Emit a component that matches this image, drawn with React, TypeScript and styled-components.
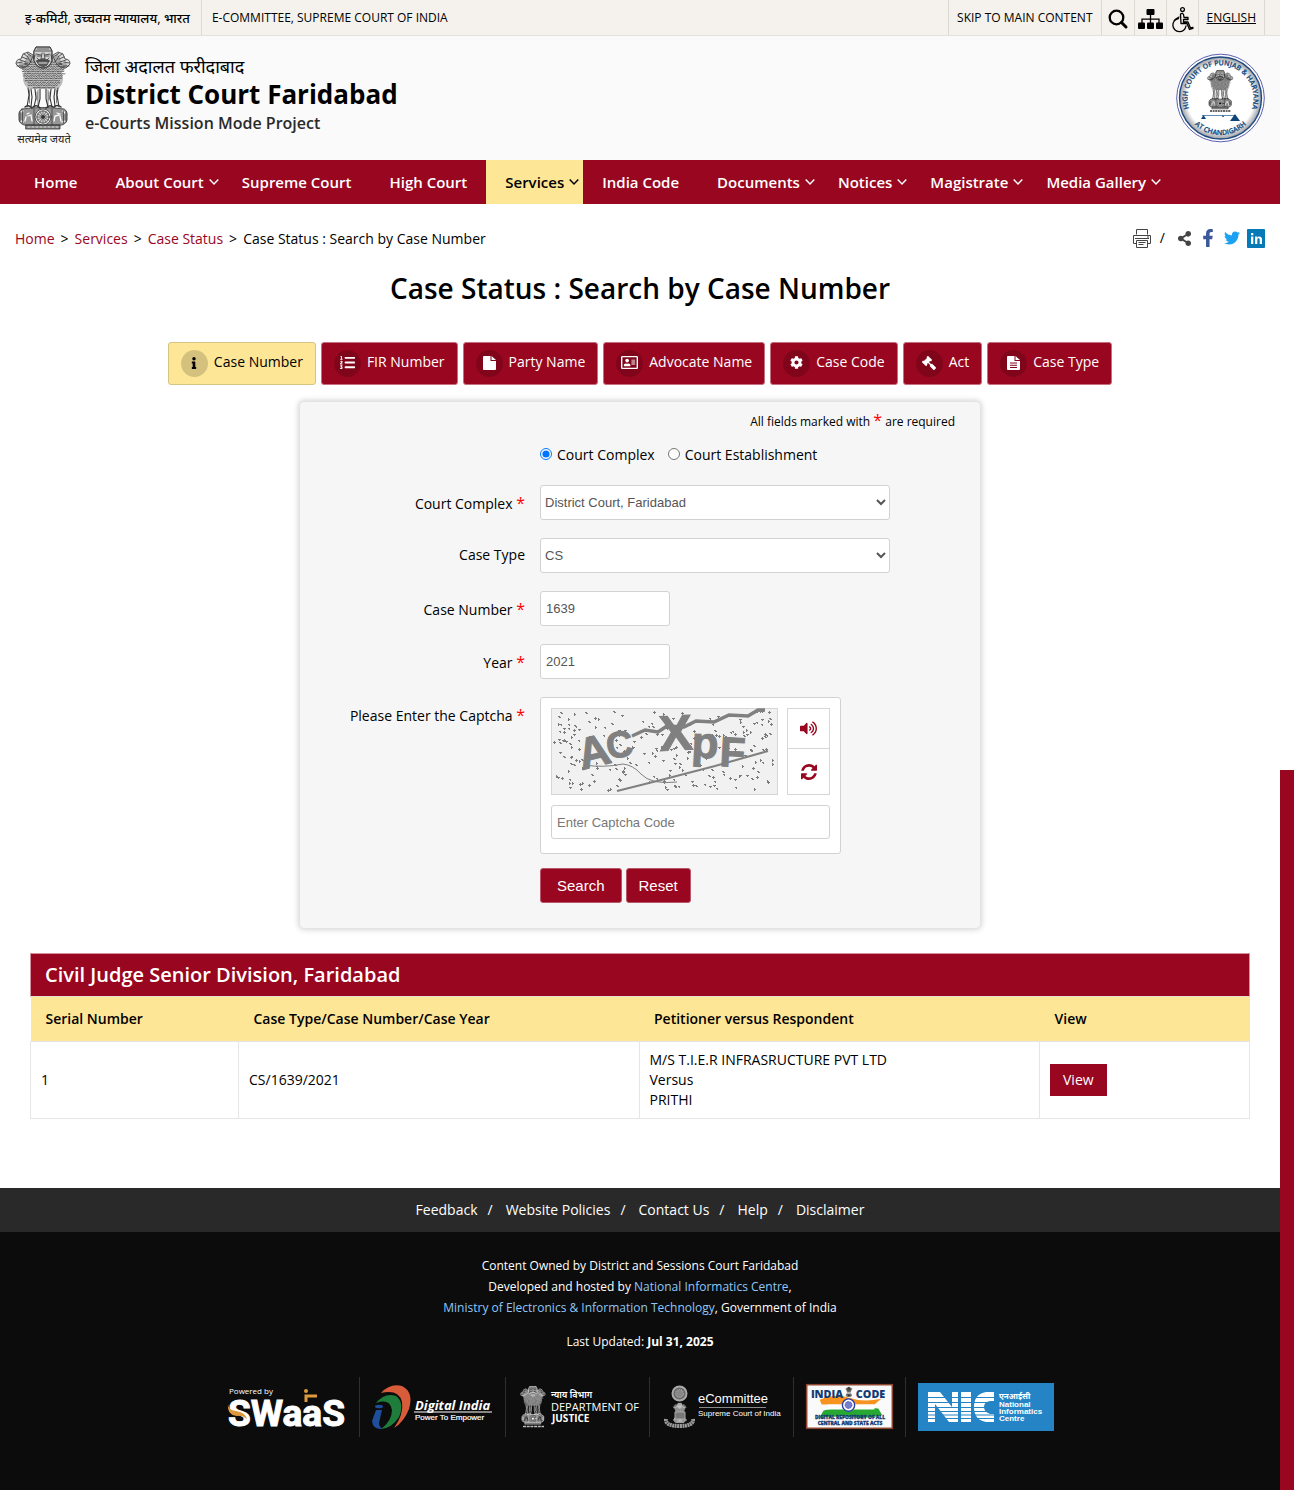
import React from "react";
import styled, { createGlobalStyle, css } from "styled-components";
import {
  FaInfo,
  FaListOl,
  FaRegAddressCard,
  FaCog,
  FaGavel,
  FaVolumeUp,
  FaShareAlt,
  FaFacebookF,
  FaTwitter,
} from "react-icons/fa";

const maroon = "#99061f";
const cream = "#fee697";
const sans = `"Open Sans", "Noto Sans", "Noto Sans Devanagari", sans-serif`;
const arial = `"Liberation Sans", Arial, sans-serif`;

const GlobalStyle = createGlobalStyle`
  *, *::before, *::after { box-sizing: border-box; }
  body { margin: 0; background: #fff; color: #000; font-family: ${sans}; font-size: 14px; line-height: 20px; }
  a { color: inherit; text-decoration: none; }
  h1, h2, p, ul, ol { margin: 0; padding: 0; }
  ul, ol { list-style: none; }
  svg { display: block; overflow: visible; }
`;

const Shell = styled.div`
  display: grid;
  grid-template-columns: minmax(0, 1fr) 14px;
  min-height: 100vh;
`;
const Page = styled.div`
  display: flex;
  flex-direction: column;
`;
const Rail = styled.div`
  display: flex;
  padding-top: 770px;
`;
const RailFill = styled.div`
  flex: 1;
  background: ${maroon};
`;

/* Top bar */
const TopBar = styled.div`
  display: flex;
  justify-content: space-between;
  height: 36px;
  padding: 0 15px;
  background: #f5f2ed;
  border-bottom: 1px solid #e3e1dd;
  font-size: 12px;
  font-weight: 500;
`;
const TopList = styled.ul`
  display: flex;
`;
const TopItem = styled.li<{ $pad?: number; $closed?: boolean }>`
  display: flex;
  align-items: center;
  padding: 0 ${(p) => p.$pad ?? 10}px;
  border-left: 1px solid #dcd9d5;
  ${(p) => (p.$closed ? css`border-right: 1px solid #dcd9d5;` : "")}
`;
const TopHindi = styled.li`
  display: flex;
  align-items: center;
  padding: 0 11px 0 10px;
  font-size: 13px;
`;
const IconButton = styled.button`
  padding: 0;
  border: 0;
  background: none;
  color: #000;
  display: flex;
  cursor: pointer;
`;
const LangLink = styled.a`
  text-decoration: underline;
`;

/* Brand header */
const Header = styled.header`
  display: flex;
  justify-content: space-between;
  align-items: flex-start;
  height: 124px;
  padding: 10px 15px;
  background: #fafafa;
`;
const Brand = styled.a`
  display: flex;
  gap: 13px;
`;
const BrandText = styled.span`
  display: flex;
  flex-direction: column;
  padding-top: 7px;
`;
const BrandHindi = styled.span`
  font-size: 18px;
  line-height: 26px;
`;
const BrandName = styled.strong`
  font-size: 26px;
  font-weight: 700;
  line-height: 30px;
`;
const BrandSub = styled.span`
  font-size: 16px;
  font-weight: 600;
  line-height: 28px;
  color: #2a2a2a;
`;
const SealLink = styled.a`
  padding-top: 7px;
`;

/* Navigation */
const Nav = styled.nav`
  background: ${maroon};
  padding: 0 15px;
`;
const NavList = styled.ul`
  display: flex;
  height: 44px;
`;
const NavLink = styled.a<{ $active?: boolean; $menu?: boolean }>`
  display: flex;
  align-items: center;
  gap: 5px;
  height: 100%;
  padding: 0 ${(p) => (p.$menu ? 4 : 19)}px 0 19px;
  font-size: 15px;
  font-weight: 600;
  white-space: nowrap;
  color: ${(p) => (p.$active ? "#000" : "#fff")};
  background: ${(p) => (p.$active ? cream : "transparent")};
`;

/* Main area */
const Main = styled.main`
  padding: 24px 15px 69px;
`;
const CrumbRow = styled.div`
  display: flex;
  justify-content: space-between;
  align-items: center;
  height: 22px;
`;
const Crumbs = styled.ol`
  display: flex;
  gap: 6px;
`;
const CrumbLink = styled.a`
  color: ${maroon};
`;
const Share = styled.div`
  display: flex;
  align-items: center;
  align-self: flex-start;
  gap: 7px;
`;
const Slash = styled.span`
  padding: 0 5px 0 2px;
`;
const Title = styled.h1`
  margin-top: 18px;
  text-align: center;
  font-size: 28px;
  font-weight: 600;
  line-height: 40px;
`;
const Tabs = styled.ul`
  display: flex;
  flex-wrap: wrap;
  justify-content: center;
  gap: 5px;
  margin-top: 34px;
`;
const TabLink = styled.a<{ $active?: boolean }>`
  display: flex;
  align-items: flex-start;
  gap: 6px;
  height: 43px;
  padding: 7px 12px;
  border: 1px solid ${(p) => (p.$active ? "#d6c484" : "#c66f7e")};
  border-radius: 3px;
  background: ${(p) => (p.$active ? cream : maroon)};
  color: ${(p) => (p.$active ? "#000" : "#fff")};
  line-height: 24px;
`;
const TabIcon = styled.span<{ $flip?: boolean }>`
  display: flex;
  align-items: center;
  justify-content: center;
  width: 27px;
  height: 27px;
  padding-bottom: 2px;
  border-radius: 50%;
  background: rgba(0, 0, 0, 0.16);
  ${(p) => (p.$flip ? css`svg { transform: scaleX(-1); }` : "")}
`;

/* Form */
const Panel = styled.form`
  width: 100%;
  max-width: 682px;
  margin: 16px auto 0;
  padding: 7px 25px 25px;
  border: 1px solid #e4e4e4;
  border-radius: 5px;
  background: #f6f6f6;
  box-shadow: 0 0 6px rgba(0, 0, 0, 0.22);
`;
const Note = styled.p`
  height: 23px;
  text-align: right;
  font-size: 12px;
`;
const Star = styled.span`
  color: #f00;
  font-size: 16px;
  line-height: 22px;
`;
const Fields = styled.div`
  display: grid;
  grid-template-columns: 200px minmax(0, 1fr);
  column-gap: 15px;
  row-gap: 18px;
  margin-top: 12px;
`;
const Radios = styled.div`
  grid-column: 2;
  display: flex;
  gap: 13px;
  height: 22px;
  margin-bottom: 1px;
`;
const RadioLabel = styled.label`
  display: flex;
  align-items: center;
  gap: 5px;
`;
const Radio = styled.input`
  width: 12px;
  height: 12px;
  margin: 0 0 2px;
`;
const FieldLabel = styled.label`
  text-align: right;
  padding-top: 7px;
`;
const control = css`
  border: 1px solid #d2d2d2;
  border-radius: 3px;
  background: #fff;
  color: #555;
  font-family: ${arial};
  font-size: 13px;
`;
const Select = styled.select`
  ${control}
  width: 100%;
  height: 35px;
  max-width: 350px;
`;
const Input = styled.input<{ $wide?: boolean }>`
  ${control}
  width: ${(p) => (p.$wide ? "100%" : "130px")};
  height: ${(p) => (p.$wide ? 34 : 35)}px;
  padding: 0 5px;
  &::placeholder {
    color: #777;
  }
`;
const CaptchaBox = styled.div`
  width: 301px;
  padding: 10px 10px 14px;
  border: 1px solid #d2d2d2;
  border-radius: 3px;
  background: #fff;
`;
const CaptchaTop = styled.div`
  display: flex;
  justify-content: space-between;
  margin-bottom: 10px;
`;
const CaptchaTools = styled.div`
  display: grid;
  grid-template-rows: 39px 1fr;
  width: 43px;
  height: 87px;
  border: 1px solid #d6d6d6;
`;
const ToolButton = styled.button`
  display: flex;
  align-items: center;
  justify-content: center;
  padding: 0;
  border: 0;
  background: #fff;
  color: ${maroon};
  cursor: pointer;
  & + & {
    border-top: 1px solid #d6d6d6;
  }
`;
const Actions = styled.div`
  grid-column: 2;
  display: flex;
  gap: 4px;
  margin-top: -4px;
`;
const ActionButton = styled.button<{ $pad: number }>`
  height: 35px;
  padding: 0 ${(p) => p.$pad}px;
  border: 1px solid #b9576a;
  border-radius: 3px;
  background: ${maroon};
  color: #fff;
  font-family: ${arial};
  font-size: 15px;
  cursor: pointer;
`;

/* Results */
const Results = styled.section`
  margin: 24px 15px 0;
`;
const Table = styled.table`
  width: 100%;
  table-layout: fixed;
  border-collapse: collapse;
`;
const SerialCol = styled.col`
  width: 208px;
`;
const ViewCol = styled.col`
  width: 210px;
`;
const Caption = styled.caption`
  height: 44px;
  padding: 0 14px;
  border: 1px solid #d6929d;
  border-bottom-color: #e6e0d0;
  background: ${maroon};
  color: #fff;
  text-align: left;
  font-size: 20px;
  font-weight: 600;
  line-height: 42px;
`;
const Th = styled.th`
  height: 44px;
  padding: 0 15px;
  background: ${cream};
  text-align: left;
  font-weight: 600;
`;
const Td = styled.td`
  height: 77px;
  padding: 8px 10px;
  border: 1px solid #e6e6e6;
`;
const ViewLink = styled.a`
  display: inline-block;
  padding: 6px 13px;
  background: ${maroon};
  color: #fff;
`;

/* Footer */
const Footer = styled.footer`
  flex: 1;
  background: #0c0c0c;
  color: #fff;
`;
const FooterLinks = styled.ul`
  display: flex;
  flex-wrap: wrap;
  justify-content: center;
  padding: 12px 0;
  background: #292929;
`;
const FooterItem = styled.li`
  & + &::before {
    content: "/";
    margin: 0 13px 0 10px;
  }
`;
const Credits = styled.div`
  padding-top: 23px;
  text-align: center;
  font-size: 12px;
  line-height: 21px;
`;
const CreditLink = styled.a`
  color: #8fc7f7;
`;
const Updated = styled.p`
  margin-top: 13px;
`;
const Logos = styled.ul`
  display: flex;
  flex-wrap: wrap;
  justify-content: center;
  margin-top: 25px;
`;
const LogoItem = styled.li`
  display: flex;
  align-items: center;
  height: 60px;
  padding: 0 12px;
  & + & {
    border-left: 1px solid #2f2f2f;
  }
`;

/* State emblem: lion capital on its abacus */
function EmblemArt({ ink, paper }: { ink: string; paper: string }) {
  const curls: [number, number][] = [];
  for (let r = 0; r < 12; r++) {
    const half = [12, 18, 20, 21, 20, 20, 19, 18, 17, 15, 14, 10][r];
    for (let x = -half; x <= half; x += 2.5) curls.push([28 + x + (r % 2), 16 + r * 2.3]);
  }
  return (
    <g fill="none" stroke={ink} strokeWidth="0.8" strokeLinecap="round">
      <path
        d="M9 17Q4 14 4 20L9 26L8 34Q10 42 15 43L42 43Q47 41 48 34L47 26L52 20Q52 14 47 17L43 8L36 10L20 10L13 8Z"
        fill={ink}
        fillOpacity="0.3"
        stroke="none"
      />
      {curls.map(([x, y], i) => (
        <path key={i} d={`M${x - 1} ${y}q1 ${i % 3 ? 2.2 : 1.2} 2 0`} strokeWidth="0.7" />
      ))}
      <path d="M19 5L21 1L35 1L37 5L37 15Q34 22 28 22Q22 22 19 15Z" fill={paper} />
      <path d="M19 5L21 1L35 1L37 5L37 15Q34 22 28 22Q22 22 19 15Z" fill={ink} fillOpacity="0.2" />
      <path d="M20 5h16M22 3h12M21 8l5 1M30 9l5-1M22 10h3.500M30.500 10H34M27 7l-1 6h4l-1-6M21 15q7-4 14 0M20 9l-1 4M36 9l1 4M22 12l2 2M34 12l-2 2" />
      <path d="M22 15Q28 13 34 15L32 19Q28 22 24 19Z" fill={ink} fillOpacity="0.75" />
      <path d="M24 17h8" stroke={paper} strokeDasharray="1.200 0.600" />
      <path
        d="M18 9L13 6L8 8L6 13Q1 13 1 18L5 22Q12 22 15 17ZM38 9L43 6L48 8L50 13Q55 13 55 18L51 22Q44 22 41 17Z"
        fill={ink}
        fillOpacity="0.15"
      />
      <path d="M9 8l4 3M7 11l5 2M5 14l6 2M2 17l5-1M2 20l6 0M12 7l4 3M13 12l3 4M9 18l4-1M47 8l-4 3M49 11l-5 2M51 14l-6 2M54 17l-5-1M54 20l-6 0M44 7l-4 3M43 12l-3 4M47 18l-4-1" />
      <path
        d="M13 42L14 49L12 61M16 43L17 51L16 61M20 43L21 52L19 61M25 43L25 53L23 61M31 43L31 53L33 61M36 43L35 52L37 61M40 43L39 51L40 61M43 42L42 49L44 61"
        strokeWidth="1.100"
      />
      <path d="M23 44v15M33 44v15M14.500 44v13M41.500 44v13M22 46v8M34 46v8" strokeWidth="0.600" />
      <path d="M18 61q4-3 7 1M31 62q4-4 7-1M10 61q3-3 7 1M39 61q3-3 7 0" strokeWidth="1.500" />
      <path
        d="M7 63Q28 60 49 63Q53 65 52 71Q53 77 47 79L9 79Q3 77 4 71Q3 65 7 63Z"
        fill={ink}
        fillOpacity="0.5"
      />
      <circle cx="28" cy="71" r="8" fill={paper} />
      <circle cx="28" cy="71" r="6.200" fill={ink} fillOpacity="0.2" />
      {Array.from({ length: 12 }, (_, i) => {
        const a = (i * Math.PI) / 6;
        return <path key={i} strokeWidth="0.600" d={`M28 71L${28 + 6 * Math.cos(a)} ${71 + 6 * Math.sin(a)}`} />;
      })}
      <circle cx="28" cy="71" r="1.400" fill={ink} />
      <path
        d="M10 75l1-4M13 70l3-1 1 6M12 68l2-1M39 75l1-5 4-1M45 70l1 5M42 67l3 1M6 66l2-1M48 65l2 2M6 75l2 1M47 76l3-1"
        stroke={paper}
        strokeWidth="1.300"
      />
      <path d="M5 66v9M7.500 65v12M19 63v16M37 63v16M48.500 65v12M51 66v9" strokeWidth="0.700" />
      <path d="M11 79h34v4h-34Z" fill={ink} fillOpacity="0.6" />
      <path d="M13 81h30" stroke={paper} strokeDasharray="2 2" />
    </g>
  );
}

function Emblem() {
  return (
    <svg width="57" height="101" viewBox="0 0 57 101" role="img" aria-label="State emblem">
      <EmblemArt ink="#333" paper="#fafafa" />
      <text x="29" y="97" textAnchor="middle" fontSize="11" fill="#222" fontFamily="Noto Sans Devanagari, Noto Sans, sans-serif">
        सत्यमेव जयते
      </text>
    </svg>
  );
}

function Seal() {
  return (
    <svg width="89" height="90" viewBox="0 0 89 90" role="img" aria-label="High Court of Punjab and Haryana at Chandigarh">
      <defs>
        <radialGradient id="sealFill">
          <stop offset="0.820" stopColor="#fff" />
          <stop offset="1" stopColor="#9a9da3" />
        </radialGradient>
        <path id="sealTop" d="M14.500 59A33 33 0 1 1 74.500 59" />
        <path id="sealBottom" d="M9.500 57A37 37 0 0 0 79.500 57" />
      </defs>
      <circle cx="44.500" cy="45" r="43.800" fill="#fff" stroke="#33359b" strokeWidth="0.800" />
      <circle cx="44.500" cy="45" r="41" fill="url(#sealFill)" stroke="#1d4a80" strokeWidth="1.400" />
      <g fill="#0f4479" fontFamily="Open Sans, sans-serif" fontWeight="600" fontSize="7" stroke="#0f4479" strokeWidth="0.200">
        <text>
          <textPath href="#sealTop" startOffset="50%" textAnchor="middle">HIGH COURT OF PUNJAB &amp; HARYANA</textPath>
        </text>
        <text>
          <textPath href="#sealBottom" startOffset="50%" textAnchor="middle">AT CHANDIGARH</textPath>
        </text>
      </g>
      <g transform="translate(31 17) scale(0.470)">
        <EmblemArt ink="#111" paper="#fff" />
      </g>
      <path d="M34 58h21" stroke="#333" strokeWidth="1.400" strokeDasharray="2 0.600" />
      <path d="M26 62.500H60" stroke="#4b7fae" strokeWidth="0.900" />
      <path d="M25 66l2.500-4 2.500 4ZM54 68l5-7 5 7ZM46 64l1-2 1 2Z" fill="#0f4479" />
    </svg>
  );
}

const SearchIcon = () => (
  <svg width="20" height="20" viewBox="0 0 20 20" fill="none" stroke="#000">
    <circle cx="8.500" cy="9.500" r="6.800" strokeWidth="2.300" />
    <path d="M13.500 14.500L18 19" strokeWidth="3" strokeLinecap="round" />
  </svg>
);
const SitemapIcon = () => (
  <svg width="25" height="20" viewBox="0 -1 25 20">
    <path d="M12.500 6v9M4 14V10.200h17V14" fill="none" stroke="#000" strokeWidth="1.300" />
    <g fill="#000">
      <rect x="8.500" y="0" width="8" height="6" rx="1" />
      <rect x="0" y="13.500" width="7" height="6.500" rx="1" />
      <rect x="9" y="13.500" width="7" height="6.500" rx="1" />
      <rect x="18" y="13.500" width="7" height="6.500" rx="1" />
    </g>
  </svg>
);
const WheelchairIcon = () => (
  <svg width="23" height="25" viewBox="0 -2 23 25" fill="none" stroke="#000" strokeWidth="1.300" strokeLinecap="round" strokeLinejoin="round">
    <circle cx="11.500" cy="2.600" r="1.900" />
    <path d="M9.500 7Q11.500 5.500 12.500 7.500L13 10.500H17V12.500H12.500V15H17L19.500 21L22 20.300M9.500 7.500L10 16.500H16L18.500 22.500L22 21.500" />
    <path d="M7.500 11.500A6.600 6.600 0 1 0 15 19M8 10Q4 12 3 14" />
  </svg>
);
const Chevron = () => (
  <svg width="10" height="10" viewBox="0 0 10 10" fill="none" stroke="currentColor" strokeWidth="1.500">
    <path d="M0.700 2.500L5 7L9.300 2.500" />
  </svg>
);
const FileIcon = ({ lined }: { lined?: boolean }) => (
  <svg width="13" height="14" viewBox="0 0 13 14" fill="currentColor">
    <path
      fillRule="evenodd"
      d={`M1 0H7.500V5H13V13Q13 14 12 14H1Q0 14 0 13V1Q0 0 1 0ZM8.500 0L13 4H8.500Z${
        lined ? "M3 6.500V7.500H10V6.500ZM3 8.700V9.700H10V8.700ZM3 11V12H10V11Z" : ""
      }`}
    />
  </svg>
);
const PrintIcon = () => (
  <svg width="18" height="19" viewBox="0 0 18 19" fill="none" stroke="#444">
    <path d="M3.500 5.500v-5h11v5M3.500 14.500h-3v-8h17v8h-3M3.500 11.500h11v7h-11ZM5.500 13.500h7M5.500 15.500h5M2 9.500h14M14 8h2" />
  </svg>
);
const LinkedInIcon = () => (
  <svg width="18" height="19" viewBox="0 0 18 19">
    <rect width="18" height="19" rx="1" fill="#0679b7" />
    <path
      d="M4 7.500h2.300V15H4ZM4 4h2.300v2.200H4ZM8 7.500h2.200v1C11.300 6.700 15 6.900 15 10.300V15h-2.300v-4.300c0-1.900-2.400-1.700-2.400 0V15H8Z"
      fill="#fff"
    />
  </svg>
);
const RefreshIcon = () => (
  <svg width="16" height="16" viewBox="0 0 1536 1536" fill="currentColor">
    <path d="M1511 928q0 5-1 7-64 268-268 434.500T764 1536q-146 0-282.500-55T238 1324l-129 129q-19 19-45 19t-45-19-19-45V960q0-26 19-45t45-19h448q26 0 45 19t19 45-19 45l-137 137q71 66 161 102t187 36q134 0 250-65t186-179q11-17 53-117 8-23 30-23h192q13 0 22.500 9.500t9.500 22.500zm25-800v448q0 26-19 45t-45 19h-448q-26 0-45-19t-19-45 19-45l138-138Q969 256 768 256q-134 0-250 65T332 500q-11 17-53 117-8 23-30 23H50q-13 0-22.500-9.500T18 608v-7q65-268 270-434.500T768 0q146 0 284 55.500T1297 212l130-129q19-19 45-19t45 19 19 45z" />
  </svg>
);

function CaptchaImage() {
  let seed = 41;
  const rand = () => {
    seed = (seed * 16807) % 2147483647;
    return seed / 2147483647;
  };
  const shapes = ["h2v1h1v1h-2v-1h-1z", "h1v1h1v1h-1v1h-1z", "h2v2h-1v-1h-1z", "h3v1h-1v1h-1v-1h-1z", "h1v1h1v1h-1v1h-1v-1h-1v-1h1z"];
  const specks = Array.from({ length: 250 }, () => {
    const x = Math.floor(3 + rand() * 219);
    const y = Math.floor(2 + rand() * 80);
    return `M${x} ${y}${shapes[Math.floor(rand() * shapes.length)]}`;
  }).join("");
  return (
    <svg width="227" height="87" viewBox="0 0 227 87" role="img" aria-label="Captcha image">
      <rect x="0.500" y="0.500" width="226" height="86" fill="#f1f1f1" stroke="#d6d6d6" />
      <path d={specks} fill="#7c7c7c" shapeRendering="crispEdges" />
      <g fill="#808080" stroke="#808080" strokeWidth="1" fontFamily="Liberation Sans, Arial, sans-serif" fontWeight="700">
        <text transform="translate(31 62) rotate(-14)" fontSize="44">A</text>
        <text transform="translate(57 51) rotate(-8)" fontSize="37">C</text>
        <text transform="translate(109 43) rotate(-3)" fontSize="50">X</text>
        <text transform="translate(140 49) rotate(3)" fontSize="44">p</text>
        <text transform="translate(168 58) rotate(3)" fontSize="42">F</text>
      </g>
      <g fill="none" stroke="#808080">
        <path d="M81 28L94 22L107 24L116 18L133 19L145 13L163 14L178 7L197 8L207 2H214" strokeWidth="3.500" />
        <path d="M66 83L110 72L164 58L217 43" strokeWidth="2" />
        <path d="M34 57Q52 60 72 56Q82 57 90 66Q100 77 126 74" strokeWidth="1" />
      </g>
    </svg>
  );
}

const logoFont = "Open Sans, sans-serif";
const SwaasLogo = () => (
  <svg width="121" height="44" viewBox="0 0 121 44" role="img" aria-label="Powered by SWaaS">
    <text x="3" y="9" fill="#fff" fontSize="8" fontFamily={logoFont}>Powered by</text>
    <text x="2" y="41" fill="#fff" stroke="#fff" strokeWidth="1" fontSize="37" fontWeight="700" fontFamily="Roboto, sans-serif">
      SWaaS
    </text>
    <path d="M2 19q0 6 8 7q9 1 11 8q-5-4-10-3q-10-1-9-12Z" fill="#dd9a3c" />
    <path d="M80 17v-6h11" fill="none" stroke="#dd9a3c" strokeWidth="3" />
    <circle cx="80" cy="6" r="2" fill="#dd9a3c" />
  </svg>
);
const DigitalIndiaLogo = () => (
  <svg width="121" height="46" viewBox="0 0 121 46" role="img" aria-label="Digital India">
    <path d="M9 9Q18-1 30 2Q42 8 37 25Q32 38 22 44Q32 30 30 18Q27 5 9 9Z" fill="#d95c3a" />
    <path d="M4 19Q13 8 24 12Q33 19 27 33Q20 44 9 45Q20 37 20 26Q18 14 4 19Z" fill="#1f7d3c" />
    <path d="M4 26h6l-3 13q0 4 4 6Q1 46 0 37Z" fill="#1f4f9a" />
    <ellipse cx="7" cy="22.500" rx="4" ry="1.800" fill="#1f4f9a" />
    <text x="43" y="26" fill="#fff" fontSize="13" fontStyle="italic" fontWeight="700" fontFamily={logoFont}>Digital India</text>
    <path d="M42 28h78" stroke="#fff" strokeWidth="1.200" />
    <text x="43" y="36" fill="#fff" stroke="#fff" strokeWidth="0.200" fontSize="8" fontFamily="Liberation Sans, sans-serif">Power To Empower</text>
  </svg>
);
const JusticeLogo = () => (
  <svg width="119" height="44" viewBox="0 0 119 44" role="img" aria-label="Department of Justice">
    <g transform="translate(2 1) scale(0.460)">
      <EmblemArt ink="#f4f4f4" paper="#0c0c0c" />
    </g>
    <path d="M5 41.500h21" stroke="#bbb" strokeWidth="1.500" strokeDasharray="3 0.700" />
    <g fill="#fff" fontFamily={logoFont}>
      <text x="33" y="13" fontSize="9" fontWeight="600" fontFamily="Noto Sans Devanagari, Noto Sans, sans-serif">न्याय विभाग</text>
      <text x="33" y="26" fontSize="11">DEPARTMENT OF</text>
      <text x="34" y="37" fontSize="10" fontWeight="700">JUSTICE</text>
    </g>
  </svg>
);
const ECommitteeLogo = () => (
  <svg width="119" height="44" viewBox="0 0 119 44" role="img" aria-label="eCommittee, Supreme Court of India">
    <circle cx="17.500" cy="8.500" r="7" fill="#666" stroke="#aaa" strokeWidth="2" />
    <circle cx="17.500" cy="8.500" r="4" fill="#888" stroke="#bbb" strokeDasharray="1 1" />
    <g transform="translate(11 18) scale(0.240)">
      <EmblemArt ink="#fff" paper="#666" />
    </g>
    <path d="M13 27h10v7h-10ZM11 35h14" fill="#777" stroke="#aaa" />
    <path d="M4 34Q3 41 17.500 41Q32 41 31 34" fill="none" stroke="#999" strokeWidth="4" strokeDasharray="2 0.500" />
    <g fill="#fff" fontFamily="Liberation Sans, sans-serif">
      <text x="36" y="18" fontSize="13">eCommittee</text>
      <text x="36" y="31" fontSize="8">Supreme Court of India</text>
    </g>
    <path d="M37 22.500h67" stroke="#aaa" strokeWidth="0.800" />
  </svg>
);
const IndiaCodeLogo = () => (
  <svg width="87" height="45" viewBox="0 0 89 46" role="img" aria-label="India Code, digital repository of all central and state acts">
    <rect x="0.700" y="0.700" width="87.600" height="44.600" fill="#fafafa" stroke="#8c452f" strokeWidth="1.600" />
    <path d="M14 16Q30 9 44 14T77 15L70 21H16Z" fill="#f79420" />
    <path d="M18 27Q40 21 74 25L78 32Q60 37 40 33L14 34Z" fill="#27a833" />
    <path d="M22 21H70V26H22Z" fill="#fff" />
    <circle cx="43.500" cy="21.500" r="6.300" fill="#fff" stroke="#2b3ba8" strokeWidth="1.400" />
    <circle cx="43.500" cy="21.500" r="3.500" fill="#7480cf" stroke="#2b3ba8" strokeDasharray="0.800 0.800" />
    <g transform="translate(40.500 3) scale(0.120)">
      <EmblemArt ink="#111" paper="#888" />
    </g>
    <g fill="#123b74" fontFamily="Open Sans, sans-serif" fontWeight="800">
      <text x="5" y="14.500" fontSize="11">INDIA</text>
      <text x="51" y="14.500" fontSize="11">CODE</text>
      <g fontSize="5" stroke="#123b74" strokeWidth="0.300" textAnchor="middle">
        <text x="45" y="36">DIGITAL REPOSITORY OF ALL</text>
        <text x="45" y="42">CENTRAL AND STATE ACTS</text>
      </g>
    </g>
  </svg>
);
const NicLogo = () => (
  <svg width="136" height="48" viewBox="0 0 136 48" role="img" aria-label="National Informatics Centre">
    <rect width="136" height="48" fill="#2484c6" />
    <path
      d="M10 9h12l12 15V9h6v30h-9L17 21v18h-7ZM43 9h10v30H43ZM76 9H68Q56 11 56 24T68 39h8V31h-4Q66 29 66 24T72 18h4Z"
      fill="#fff"
    />
    <path d="M9 14.500h68M9 19.500h68M9 24.500h68M9 28.500h68M9 32h68M9 35.500h68" stroke="#2484c6" strokeWidth="1" />
    <g fill="#fff" fontFamily="Liberation Sans, sans-serif" fontSize="8" fontWeight="700">
      <text x="81" y="16" fontFamily="Noto Sans Devanagari, Noto Sans, sans-serif">एनआईसी</text>
      <text x="81" y="24">National</text>
      <text x="81" y="31">Informatics</text>
      <text x="81" y="38">Centre</text>
    </g>
  </svg>
);

const navItems = [
  { label: "Home" },
  { label: "About Court", menu: true },
  { label: "Supreme Court" },
  { label: "High Court" },
  { label: "Services", menu: true, active: true },
  { label: "India Code" },
  { label: "Documents", menu: true },
  { label: "Notices", menu: true },
  { label: "Magistrate", menu: true },
  { label: "Media Gallery", menu: true },
];
const tabs = [
  { label: "Case Number", icon: <FaInfo size={12} />, active: true },
  { label: "FIR Number", icon: <FaListOl size={15} /> },
  { label: "Party Name", icon: <FileIcon /> },
  { label: "Advocate Name", icon: <FaRegAddressCard size={17} /> },
  { label: "Case Code", icon: <FaCog size={13} /> },
  { label: "Act", icon: <FaGavel size={14} />, flip: true },
  { label: "Case Type", icon: <FileIcon lined /> },
];
const required = <Star aria-hidden="true">*</Star>;

export default function App() {
  return (
    <>
      <GlobalStyle />
      <Shell>
        <Page>
          <TopBar>
            <TopList>
              <TopHindi>इ-कमिटी, उच्चतम न्यायालय, भारत</TopHindi>
              <TopItem>E-COMMITTEE, SUPREME COURT OF INDIA</TopItem>
            </TopList>
            <TopList>
              <TopItem $pad={8}><a href="#main">SKIP TO MAIN CONTENT</a></TopItem>
              <TopItem $pad={6}><IconButton aria-label="Search site"><SearchIcon /></IconButton></TopItem>
              <TopItem $pad={3}><IconButton aria-label="Sitemap"><SitemapIcon /></IconButton></TopItem>
              <TopItem $pad={4}><IconButton aria-label="Accessibility"><WheelchairIcon /></IconButton></TopItem>
              <TopItem $pad={8} $closed><LangLink href="#language">ENGLISH</LangLink></TopItem>
            </TopList>
          </TopBar>
          <Header>
            <Brand href="#home">
              <Emblem />
              <BrandText>
                <BrandHindi>जिला अदालत फरीदाबाद</BrandHindi>
                <BrandName>District Court Faridabad</BrandName>
                <BrandSub>e-Courts Mission Mode Project</BrandSub>
              </BrandText>
            </Brand>
            <SealLink href="#highcourt"><Seal /></SealLink>
          </Header>
          <Nav>
            <NavList>
              {navItems.map((n) => (
                <li key={n.label}>
                  <NavLink href="#nav" $active={n.active} $menu={n.menu}>
                    {n.label}
                    {n.menu && <Chevron />}
                  </NavLink>
                </li>
              ))}
            </NavList>
          </Nav>
          <Main id="main">
            <CrumbRow>
              <Crumbs>
                <li><CrumbLink href="#home">Home</CrumbLink></li>
                <li>&gt;</li>
                <li><CrumbLink href="#services">Services</CrumbLink></li>
                <li>&gt;</li>
                <li><CrumbLink href="#status">Case Status</CrumbLink></li>
                <li>&gt;</li>
                <li>Case Status : Search by Case Number</li>
              </Crumbs>
              <Share>
                <IconButton aria-label="Print"><PrintIcon /></IconButton>
                <Slash>/</Slash>
                <IconButton aria-label="Share"><FaShareAlt size={15} color="#444" /></IconButton>
                <a href="#facebook" aria-label="Facebook"><FaFacebookF size={18} color="#3b5998" /></a>
                <a href="#twitter" aria-label="Twitter"><FaTwitter size={16} color="#1da1f2" /></a>
                <a href="#linkedin" aria-label="LinkedIn"><LinkedInIcon /></a>
              </Share>
            </CrumbRow>
            <Title>Case Status : Search by Case Number</Title>
            <Tabs>
              {tabs.map((t) => (
                <li key={t.label}>
                  <TabLink href="#tab" $active={t.active}>
                    <TabIcon $flip={t.flip}>{t.icon}</TabIcon>
                    {t.label}
                  </TabLink>
                </li>
              ))}
            </Tabs>
            <Panel>
              <Note>All fields marked with {required} are required</Note>
              <Fields>
                <Radios>
                  <RadioLabel><Radio type="radio" name="court" defaultChecked />Court Complex</RadioLabel>
                  <RadioLabel><Radio type="radio" name="court" />Court Establishment</RadioLabel>
                </Radios>
                <FieldLabel htmlFor="complex">Court Complex {required}</FieldLabel>
                <Select id="complex"><option>District Court, Faridabad</option></Select>
                <FieldLabel htmlFor="type">Case Type</FieldLabel>
                <Select id="type"><option>CS</option></Select>
                <FieldLabel htmlFor="number">Case Number {required}</FieldLabel>
                <Input id="number" defaultValue="1639" />
                <FieldLabel htmlFor="year">Year {required}</FieldLabel>
                <Input id="year" defaultValue="2021" />
                <FieldLabel htmlFor="captcha">Please Enter the Captcha {required}</FieldLabel>
                <CaptchaBox>
                  <CaptchaTop>
                    <CaptchaImage />
                    <CaptchaTools>
                      <ToolButton type="button" aria-label="Play captcha"><FaVolumeUp size={17} /></ToolButton>
                      <ToolButton type="button" aria-label="Refresh captcha"><RefreshIcon /></ToolButton>
                    </CaptchaTools>
                  </CaptchaTop>
                  <Input id="captcha" $wide placeholder="Enter Captcha Code" />
                </CaptchaBox>
                <Actions>
                  <ActionButton type="button" $pad={16}>Search</ActionButton>
                  <ActionButton type="reset" $pad={12}>Reset</ActionButton>
                </Actions>
              </Fields>
            </Panel>
            <Results>
              <Table>
                <Caption>Civil Judge Senior Division, Faridabad</Caption>
                <colgroup>
                  <SerialCol />
                  <col />
                  <col />
                  <ViewCol />
                </colgroup>
                <thead>
                  <tr>
                    <Th scope="col">Serial Number</Th>
                    <Th scope="col">Case Type/Case Number/Case Year</Th>
                    <Th scope="col">Petitioner versus Respondent</Th>
                    <Th scope="col">View</Th>
                  </tr>
                </thead>
                <tbody>
                  <tr>
                    <Td>1</Td>
                    <Td>CS/1639/2021</Td>
                    <Td>M/S T.I.E.R INFRASRUCTURE PVT LTD<br />Versus<br />PRITHI</Td>
                    <Td><ViewLink href="#view">View</ViewLink></Td>
                  </tr>
                </tbody>
              </Table>
            </Results>
          </Main>
          <Footer>
            <FooterLinks>
              {["Feedback", "Website Policies", "Contact Us", "Help", "Disclaimer"].map((l) => (
                <FooterItem key={l}><a href="#footer">{l}</a></FooterItem>
              ))}
            </FooterLinks>
            <Credits>
              <p>Content Owned by District and Sessions Court Faridabad</p>
              <p>Developed and hosted by <CreditLink href="#nic">National Informatics Centre</CreditLink>,</p>
              <p><CreditLink href="#meity">Ministry of Electronics &amp; Information Technology</CreditLink>, Government of India</p>
              <Updated>Last Updated: <strong>Jul 31, 2025</strong></Updated>
            </Credits>
            <Logos>
              <LogoItem><SwaasLogo /></LogoItem>
              <LogoItem><DigitalIndiaLogo /></LogoItem>
              <LogoItem><JusticeLogo /></LogoItem>
              <LogoItem><ECommitteeLogo /></LogoItem>
              <LogoItem><IndiaCodeLogo /></LogoItem>
              <LogoItem><NicLogo /></LogoItem>
            </Logos>
          </Footer>
        </Page>
        <Rail><RailFill /></Rail>
      </Shell>
    </>
  );
}
